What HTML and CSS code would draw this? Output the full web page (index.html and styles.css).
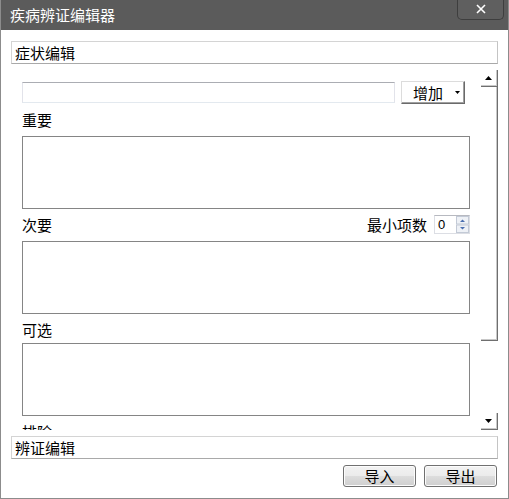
FILE: index.html
```html
<!DOCTYPE html>
<html lang="zh">
<head>
<meta charset="utf-8">
<title>疾病辨证编辑器</title>
<link rel="stylesheet" href="styles.css">
</head>
<body>
<div class="window">
  <div class="titlebar">
    <span class="title">疾病辨证编辑器</span>
    <div class="close">
      <svg width="10" height="10" viewBox="0 0 10 10"><path d="M1 1L9 9M9 1L1 9" stroke="#fff" stroke-width="1.6" fill="none"/></svg>
    </div>
  </div>
  <div class="body">
    <div class="section-head">症状编辑</div>
    <div class="scroll">
      <div class="scroll-content">
        <div class="add-row">
          <div class="textbox"></div>
          <div class="btn-add"><span>增加</span>
            <svg width="5" height="3" viewBox="0 0 5 3"><path d="M0 0H5L2.5 3Z" fill="#000"/></svg>
          </div>
        </div>
        <div class="label">重要</div>
        <div class="area area-first"></div>
        <div class="label-row">
          <span class="lbl">次要</span>
          <span class="lbl right">最小项数</span>
          <div class="spin">
            <span class="spin-val">0</span>
            <svg class="spin-btns" width="13" height="17" viewBox="0 0 13 17">
              <rect x="0.5" y="0.5" width="12" height="7.5" fill="#eef1f6" stroke="#c3cad6"/>
              <rect x="0.5" y="9" width="12" height="7.5" fill="#eef1f6" stroke="#c3cad6"/>
              <path d="M4 6H9L6.5 3.5Z" fill="#4a6fb0"/>
              <path d="M4 11H9L6.5 13.5Z" fill="#4a6fb0"/>
            </svg>
          </div>
        </div>
        <div class="area"></div>
        <div class="label">可选</div>
        <div class="area"></div>
        <div class="label">排除</div>
        <div class="area"></div>
      </div>
      <div class="vscroll">
        <div class="sb-btn">
          <svg width="7" height="4" viewBox="0 0 7 4"><path d="M0 4H7L3.5 0Z" fill="#000"/></svg>
        </div>
        <div class="sb-thumb"></div>
        <div class="sb-track"></div>
        <div class="sb-btn">
          <svg width="7" height="4" viewBox="0 0 7 4"><path d="M0 0H7L3.5 4Z" fill="#000"/></svg>
        </div>
      </div>
    </div>
    <div class="section-head">辨证编辑</div>
    <div class="footer">
      <div class="btn">导入</div>
      <div class="btn">导出</div>
    </div>
  </div>
</div>
</body>
</html>
```
FILE: styles.css
```css
* { box-sizing: border-box; }
html, body { margin: 0; padding: 0; background: #fff; }
body {
  font-family: "Noto Sans CJK SC", "Noto Sans", sans-serif;
  font-size: 15px;
  color: #000;
}
.window {
  width: 509px;
  height: 499px;
  border: 1px solid #8c8c8c;
  border-top: none;
  background: #fff;
  overflow: hidden;
}
.titlebar {
  height: 30px;
  margin: 0 -1px;
  background: #5b5b5b;
  display: flex;
  align-items: center;
  padding-left: 10px;
}
.title {
  color: #fff;
  font-size: 15px;
  line-height: 20px;
  letter-spacing: 0;
}
.close {
  align-self: flex-start;
  margin-left: auto;
  margin-right: 5px;
  width: 47px;
  height: 20px;
  border: 1px solid #3e3e3e;
  border-top: none;
  border-radius: 0 0 5px 5px;
  background: #5f5f5f;
  display: flex;
  align-items: center;
  justify-content: center;
  padding-bottom: 1px;
}
.body {
  padding: 11px 10px 0 10px;
}
.section-head {
  height: 23px;
  border: 1px solid #d4d4d4;
  border-bottom-color: #a9a9a9;
  border-right-color: #c4c4c4;
  padding-left: 3px;
  line-height: 21px;
  font-size: 15px;
}
.scroll {
  height: 372px;
  display: flex;
  align-items: flex-start;
}
.scroll-content {
  width: 470px;
  height: 366px;
  overflow: hidden;
  padding: 17px 11px 0 11px;
}
.add-row {
  display: flex;
  align-items: center;
  height: 23px;
  gap: 6px;
}
.textbox {
  width: 373px;
  height: 21px;
  border: 1px solid #e2e3ea;
  border-top-color: #abadb3;
  border-bottom-color: #e3e9ef;
}
.btn-add {
  width: 64px;
  height: 23px;
  border: 1px solid #dcdcdc;
  border-right-color: #6a6a6a;
  border-bottom-color: #6a6a6a;
  box-shadow: inset -1px -1px 0 #a0a0a0;
  display: flex;
  align-items: center;
  padding-left: 11px;
  line-height: 20px;
}
.btn-add svg { margin-left: 12px; }
.label {
  padding-top: 6px;
  padding-bottom: 3px;
  line-height: 20px;
}
.area {
  height: 73px;
  border: 1px solid #858585;
}
.area-first { margin-top: 3px; }
.label-row {
  display: flex;
  align-items: center;
  height: 32px;
  padding: 6px 0 7px 0;
  line-height: 19px;
}
.lbl.right { margin-left: auto; margin-right: 7px; }
.spin {
  width: 36px;
  height: 19px;
  border: 1px solid #dcdee4;
  border-top-color: #b7b9c0;
  display: flex;
  align-items: center;
  padding-left: 3px;
  font-family: "Liberation Sans", sans-serif;
  font-size: 13px;
}
.spin-btns { margin-left: auto; margin-right: 0; }
.vscroll {
  margin-top: 6px;
  width: 17px;
  height: 360px;
  display: flex;
  flex-direction: column;
}
.sb-btn {
  height: 17px;
  border-right: 1px solid #6f6f6f;
  border-bottom: 1px solid #6f6f6f;
  box-shadow: inset -1px -1px 0 #c8c8c8;
  display: flex;
  align-items: center;
  justify-content: center;
  padding-right: 1px;
}
.sb-thumb {
  height: 254px;
  border-right: 1px solid #6f6f6f;
  border-bottom: 1px solid #6f6f6f;
  box-shadow: inset -1px -1px 0 #c8c8c8;
}
.sb-track { flex: 1; }
.footer {
  display: flex;
  justify-content: flex-end;
  gap: 8px;
  margin-top: 6px;
  padding-right: 1px;
}
.btn {
  width: 73px;
  height: 22px;
  border: 1px solid #707070;
  border-radius: 3px;
  background: linear-gradient(#f2f2f2 0%, #ebebeb 50%, #dddddd 51%, #cfcfcf 100%);
  box-shadow: inset 0 0 0 1px #fcfcfc;
  text-align: center;
  line-height: 20px;
}
```
